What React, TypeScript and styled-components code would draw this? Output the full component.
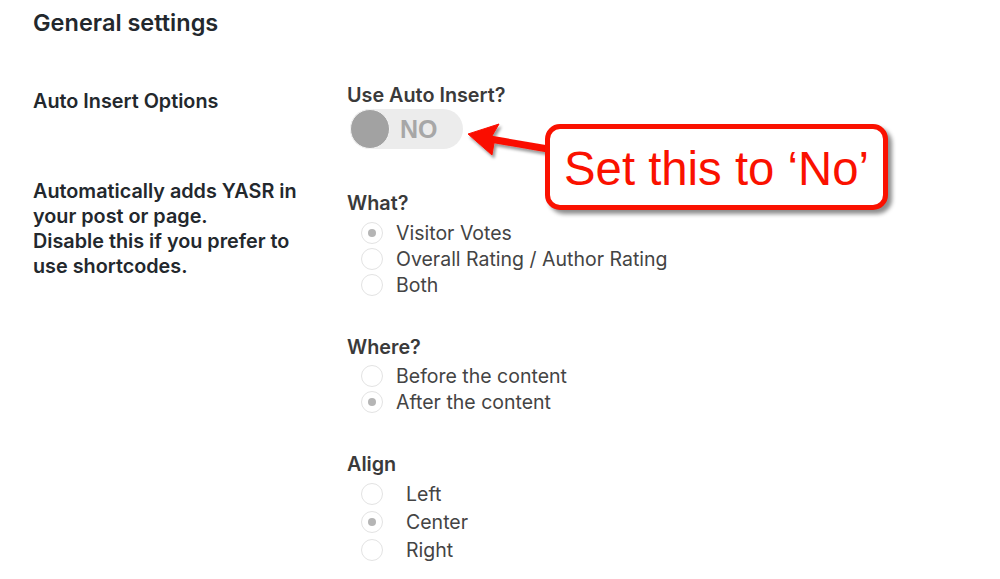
import React from "react";
import styled, { createGlobalStyle } from "styled-components";

const Global = createGlobalStyle`
  html, body { margin: 0; padding: 0; background: #ffffff; }
  body { font-family: Inter, "Noto Sans", "Liberation Sans", sans-serif; color: #23282d; }
  * { box-sizing: border-box; }
`;

const Page = styled.div`
  position: relative;
  width: 1000px;
  height: 579px;
  overflow: hidden;
  padding: 10px 0 0 33px;
`;

const Title = styled.h2`
  margin: 0;
  font-size: 23.5px;
  line-height: 26px;
  font-weight: 600;
  color: #23282d;
`;

const FormRow = styled.div`
  display: grid;
  grid-template-columns: 314px 1fr;
  margin-top: 49px;
`;

const LeftCol = styled.div`
  display: flex;
  flex-direction: column;
  padding-top: 6px;
`;

const RowLabel = styled.div`
  font-size: 19.8px;
  line-height: 20px;
  font-weight: 600;
  color: #23282d;
`;

const Description = styled.p`
  margin: 68px 0 0;
  font-size: 19.8px;
  line-height: 25px;
  font-weight: 600;
  color: #23282d;
`;

const RightCol = styled.div`
  display: flex;
  flex-direction: column;
`;

const FieldLabel = styled.div<{ $gap?: number }>`
  margin-top: ${(p) => p.$gap ?? 0}px;
  font-size: 19.8px;
  line-height: 20px;
  font-weight: 600;
  color: #3a3a3a;
`;

const Toggle = styled.div`
  margin: 4px 0 0 3px;
  width: 113px;
  height: 40px;
  border-radius: 20px;
  background: #ececec;
  display: flex;
  align-items: center;
`;

const Knob = styled.span`
  width: 40px;
  height: 40px;
  border-radius: 50%;
  background: #a2a2a2;
  border: 1px solid #f4f4f4;
  flex: none;
`;

const ToggleText = styled.span`
  margin-left: 10px;
  font-family: "Liberation Sans", Arial, sans-serif;
  font-size: 25px;
  font-weight: 700;
  color: #a7a7a7;
`;

const RadioList = styled.div<{ $gap: number }>`
  display: flex;
  flex-direction: column;
  margin-top: ${(p) => p.$gap}px;
`;

const RadioRow = styled.label<{ $h: number }>`
  display: flex;
  align-items: center;
  height: ${(p) => p.$h}px;
  padding-left: 14px;
  font-size: 19.5px;
  color: #444444;
`;

const Circle = styled.span<{ $checked?: boolean }>`
  width: 22px;
  height: 22px;
  border-radius: 50%;
  border: 1px solid #e3e3e3;
  background: #ffffff;
  display: flex;
  align-items: center;
  justify-content: center;
  flex: none;
  &::after {
    content: "";
    width: 8px;
    height: 8px;
    border-radius: 50%;
    background: ${(p) => (p.$checked ? "#b5b5b5" : "transparent")};
  }
`;

const RadioText = styled.span<{ $gap: number }>`
  margin-left: ${(p) => p.$gap}px;
  line-height: 22px;
`;

const Callout = styled.div`
  position: absolute;
  left: 545px;
  top: 124px;
  width: 343px;
  height: 86px;
  border: 5px solid #fa1100;
  border-radius: 15px;
  background: #ffffff;
  box-shadow: 4px 4px 4px rgba(0, 0, 0, 0.45);
  display: flex;
  align-items: center;
  justify-content: center;
  font-family: "Liberation Sans", Arial, sans-serif;
  font-size: 47.3px;
  color: #fa1100;
  padding-top: 2px;
`;

const ArrowSvg = styled.svg`
  position: absolute;
  left: 460px;
  top: 115px;
  overflow: visible;
`;

type Opt = { label: string; checked?: boolean };

const Group = ({
  title,
  gap,
  listGap,
  options,
  rowH,
  textGap,
}: {
  title: string;
  gap: number;
  listGap: number;
  options: Opt[];
  rowH: number;
  textGap: number;
}) => (
  <>
    <FieldLabel $gap={gap}>{title}</FieldLabel>
    <RadioList $gap={listGap}>
      {options.map((o) => (
        <RadioRow key={o.label} $h={rowH}>
          <Circle $checked={o.checked} />
          <RadioText $gap={textGap}>{o.label}</RadioText>
        </RadioRow>
      ))}
    </RadioList>
  </>
);

export default function App() {
  return (
    <>
      <Global />
      <Page>
        <Title>General settings</Title>
        <FormRow>
          <LeftCol>
            <RowLabel>Auto Insert Options</RowLabel>
            <Description>
              Automatically adds YASR in
              <br />
              your post or page.
              <br />
              Disable this if you prefer to
              <br />
              use shortcodes.
            </Description>
          </LeftCol>
          <RightCol>
            <FieldLabel>Use Auto Insert?</FieldLabel>
            <Toggle>
              <Knob />
              <ToggleText>NO</ToggleText>
            </Toggle>
            <Group
              title="What?"
              gap={44}
              listGap={7}
              rowH={26}
              textGap={13}
              options={[
                { label: "Visitor Votes", checked: true },
                { label: "Overall Rating / Author Rating" },
                { label: "Both" },
              ]}
            />
            <Group
              title="Where?"
              gap={39}
              listGap={6}
              rowH={26}
              textGap={13}
              options={[
                { label: "Before the content" },
                { label: "After the content", checked: true },
              ]}
            />
            <Group
              title="Align"
              gap={39}
              listGap={6}
              rowH={28}
              textGap={23}
              options={[
                { label: "Left" },
                { label: "Center", checked: true },
                { label: "Right" },
              ]}
            />
          </RightCol>
        </FormRow>
        <ArrowSvg width="100" height="50" viewBox="0 0 100 50">
          <defs>
            <filter id="sh" x="-20%" y="-20%" width="160%" height="160%">
              <feDropShadow dx="2" dy="3" stdDeviation="1.5" floodColor="#000" floodOpacity="0.4" />
            </filter>
          </defs>
          <g filter="url(#sh)" fill="#fa1100" stroke="#fa1100">
            <line x1="30" y1="24" x2="88" y2="34" strokeWidth="7" />
            <polygon points="8,19 39,9 32,21 34,28 32,40" strokeWidth="1" strokeLinejoin="round" />
          </g>
        </ArrowSvg>
        <Callout>Set this to ‘No’</Callout>
      </Page>
    </>
  );
}
